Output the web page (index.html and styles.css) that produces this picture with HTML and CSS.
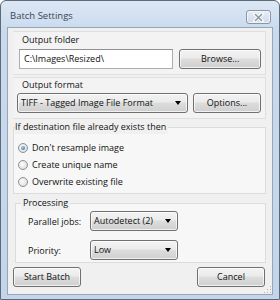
FILE: index.html
```html
<!DOCTYPE html>
<html lang="en">
<head>
    <meta charset="UTF-8">
    <title>Batch Settings</title>

    <link rel="stylesheet" href="styles.css">
</head>

<body>
    <div class="window">
        <div class="titlebar">
            <span class="title">Batch Settings</span>
            <span class="close-btn">
                <svg width="11" height="9" viewBox="0 0 11 9">
                    <path d="M2 1 L9 8 M9 1 L2 8" stroke="#fff" stroke-width="3.2" stroke-linecap="square"/>
                    <path d="M2 1 L9 8 M9 1 L2 8" stroke="#8d98a6" stroke-width="1.6"/>
                </svg>
            </span>
        </div>

        <div class="client">
            <div class="panel">
                <div class="panel-label">Output folder</div>
                <div class="row">
                    <div class="textbox">C:\Images\Resized\</div>
                    <div class="button browse">Browse...</div>
                </div>
            </div>

            <div class="panel panel-format">
                <div class="panel-label">Output format</div>
                <div class="row">
                    <div class="combo format">
                        <span>TIFF - Tagged Image File Format</span>
                        <span class="arrow"></span>
                    </div>
                    <div class="button options">Options...</div>
                </div>
            </div>

            <div class="group group-exists">
                <div class="legend legend-exists">If destination file already exists then</div>
                <label class="radio"><span class="dot checked"></span>Don't resample image</label>
                <label class="radio"><span class="dot"></span>Create unique name</label>
                <label class="radio"><span class="dot"></span>Overwrite existing file</label>
            </div>

            <div class="group group-processing">
                <div class="legend legend-processing">Processing</div>
                <div class="field">
                    <span class="field-label">Parallel jobs:</span>
                    <div class="combo small">
                        <span>Autodetect (2)</span>
                        <span class="arrow"></span>
                    </div>
                </div>
                <div class="field">
                    <span class="field-label">Priority:</span>
                    <div class="combo small">
                        <span>Low</span>
                        <span class="arrow"></span>
                    </div>
                </div>
            </div>

            <div class="footer">
                <div class="button">Start Batch</div>
                <div class="button">Cancel</div>
            </div>
            <span class="grip"></span>
        </div>
    </div>
</body>
</html>
```

FILE: styles.css
```css
body {
    margin: 0;
    background: #fff;
    font: normal 9px "Open Sans", "Noto Sans", sans-serif;
    color: #111;
}

.window {
    width: 280px;
    height: 300px;
    box-sizing: border-box;
    border: 1px solid #5f6a78;
    border-radius: 6px 6px 0 0;
    background: linear-gradient(#dce7f4, #c9daee 30px, #c3d5ea);
    padding: 0 6px 4px 6px;
    display: flex;
    flex-direction: column;
}

.titlebar {
    height: 26px;
    display: flex;
    align-items: flex-start;
    justify-content: space-between;
    padding: 0 2px 0 3px;
}

.title {
    font-size: 9.5px;
    line-height: 14px;
    color: #3c4552;
    margin-top: 8px;
}

.close-btn {
    width: 23px;
    height: 12px;
    margin-top: 9px;
    border: 1px solid #8896a8;
    border-radius: 3px;
    background: linear-gradient(#e6edf6, #d0dbe8);
    display: flex;
    align-items: center;
    justify-content: center;
    box-shadow: inset 0 0 0 1px rgba(255, 255, 255, 0.6);
}

.client {
    flex: 1;
    position: relative;
    background: #f0f0f0;
    border: 1px solid #97a5b7;
    padding: 3px 6px 0 5px;
    display: flex;
    flex-direction: column;
}

.panel {
    height: 42px;
    border: 1px solid #dfdfdf;
    border-left-color: #f0f0f0;
    background: #f3f3f3;
    padding: 0 4px 0 5px;
}

.panel-format {
    height: 40px;
    margin-top: 2px;
    padding-left: 3px;
}

.panel-label {
    height: 14px;
    line-height: 14px;
    margin-top: 1px;
    margin-bottom: 2px;
    padding-left: 3px;
}

.panel-format .panel-label {
    margin-top: 0;
    margin-bottom: 1px;
    padding-left: 5px;
}

.row {
    display: flex;
    gap: 5px;
    align-items: center;
}

.textbox {
    width: 151px;
    height: 18px;
    line-height: 18px;
    border: 1px solid #abadb3;
    border-top-color: #8e9196;
    background: #fff;
    padding-left: 4px;
    margin-right: 1px;
}

.button {
    height: 18px;
    line-height: 18px;
    border: 1px solid #707070;
    border-radius: 3px;
    background: linear-gradient(#f3f3f3, #ebebeb 45%, #dddddd 50%, #cfcfcf);
    box-shadow: inset 0 0 0 1px rgba(255, 255, 255, 0.7);
    text-align: center;
}

.browse {
    width: 81px;
}

.options {
    width: 66px;
}

.combo {
    height: 18px;
    line-height: 18px;
    border: 1px solid #707070;
    border-radius: 3px;
    background: linear-gradient(#f3f3f3, #ebebeb 45%, #dddddd 50%, #cfcfcf);
    box-shadow: inset 0 0 0 1px rgba(255, 255, 255, 0.7);
    display: flex;
    justify-content: space-between;
    align-items: center;
    padding: 0 6px 0 3px;
}

.format {
    width: 160px;
}

.small {
    width: 77px;
}

.arrow {
    width: 0;
    height: 0;
    border-left: 3.5px solid transparent;
    border-right: 3.5px solid transparent;
    border-top: 4px solid #000;
}

.group {
    position: relative;
    border: 1px solid #dcdcdc;
    background: #f7f7f7;
}

.group-exists {
    margin-top: 8px;
    padding: 11px 0 3px 4px;
    height: 51px;
}

.group-processing {
    margin-top: 9px;
    margin-left: 2px;
    padding: 7px 0 0 12px;
    height: 51px;
}

.legend {
    position: absolute;
    top: -8px;
    background: #f0f0f0;
    line-height: 14px;
    padding-right: 2px;
}

.legend-exists {
    left: 1px;
}

.legend-processing {
    left: 5px;
    padding: 0 2px;
}

.radio {
    display: flex;
    align-items: center;
    height: 17px;
    gap: 4px;
}

.dot {
    width: 8px;
    height: 8px;
    border-radius: 50%;
    border: 1px solid #8e8f8f;
    background: radial-gradient(circle at 40% 40%, #fdfdfd, #d4d4d4);
    position: relative;
}

.dot.checked::after {
    content: "";
    position: absolute;
    left: 2px;
    top: 2px;
    width: 4px;
    height: 4px;
    border-radius: 50%;
    background: radial-gradient(circle at 40% 35%, #a8d4f4, #1a5fa8);
}

.field {
    display: flex;
    align-items: center;
    height: 20px;
}

.field + .field {
    margin-top: 9px;
}

.field-label {
    min-width: 62px;
}

.footer {
    display: flex;
    justify-content: space-between;
    margin-top: 4px;
    padding-right: 1px;
}

.footer .button {
    width: 66px;
}

.grip {
    position: absolute;
    right: 1px;
    bottom: 1px;
    width: 8px;
    height: 8px;
    background:
        radial-gradient(circle, #b5b5b5 0.8px, transparent 1px) 0 0 / 3px 3px;
    clip-path: polygon(100% 0, 100% 100%, 0 100%);
}
```
